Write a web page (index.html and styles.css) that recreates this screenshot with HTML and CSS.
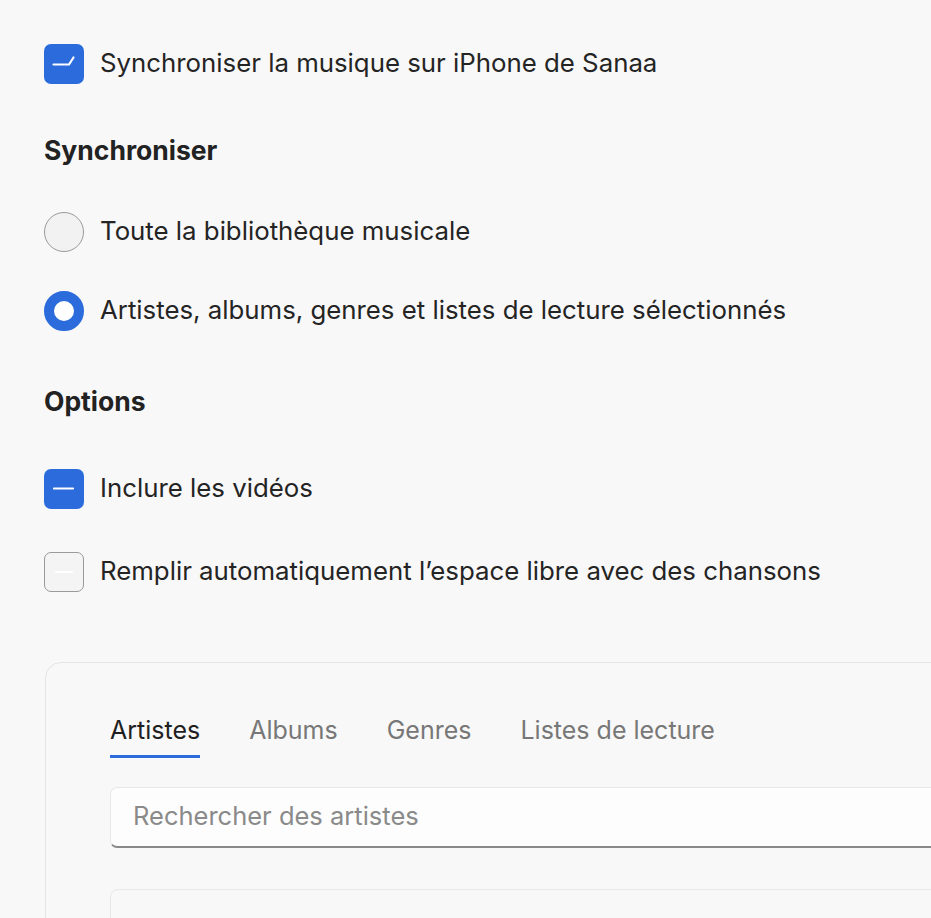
FILE: index.html
```html
<!DOCTYPE html>
<html lang="fr">
<head>
<meta charset="utf-8">
<link rel="stylesheet" href="styles.css">
</head>
<body>
<div class="page">
  <label class="row row-sync">
    <span class="check check-on">
      <svg viewBox="0 0 40 40" width="40" height="40"><path d="M9.5 20.5 H25 L29.5 13.5" fill="none" stroke="#fff" stroke-width="2.2" stroke-linecap="round" stroke-linejoin="round"/></svg>
    </span>
    <span class="label">Synchroniser la musique sur iPhone de Sanaa</span>
  </label>

  <h2 class="heading heading-sync">Synchroniser</h2>

  <label class="row row-radio1">
    <span class="radio"></span>
    <span class="label">Toute la bibliothèque musicale</span>
  </label>
  <label class="row row-radio2">
    <span class="radio radio-on"></span>
    <span class="label">Artistes, albums, genres et listes de lecture sélectionnés</span>
  </label>

  <h2 class="heading heading-options">Options</h2>

  <label class="row row-videos">
    <span class="check check-on">
      <svg viewBox="0 0 40 40" width="40" height="40"><path d="M10 19.5 H29" fill="none" stroke="#fff" stroke-width="2.2" stroke-linecap="round"/></svg>
    </span>
    <span class="label">Inclure les vidéos</span>
  </label>
  <label class="row row-fill">
    <span class="check check-off">
      <svg viewBox="0 0 40 40" width="40" height="40"><path d="M12 20 H28" fill="none" stroke="#fff" stroke-width="2.2" stroke-linecap="round"/></svg>
    </span>
    <span class="label">Remplir automatiquement l’espace libre avec des chansons</span>
  </label>

  <section class="panel">
    <nav class="tabs">
      <span class="tab tab-active">Artistes</span>
      <span class="tab">Albums</span>
      <span class="tab">Genres</span>
      <span class="tab">Listes de lecture</span>
    </nav>
    <div class="search">Rechercher des artistes</div>
    <div class="list"></div>
  </section>
</div>
</body>
</html>
```

FILE: styles.css
```css
html, body {
  margin: 0;
  padding: 0;
  background: #f8f8f8;
  overflow: hidden;
  height: 918px;
}
body {
  font-family: Inter, "Noto Sans", "Liberation Sans", sans-serif;
  color: #222222;
}
.page {
  padding: 44px 0 0 44px;
  display: flex;
  flex-direction: column;
}
.row {
  display: flex;
  align-items: center;
  gap: 16px;
  height: 40px;
}
.label {
  font-size: 25.8px;
  line-height: 32px;
  padding-bottom: 3px;
  color: #242424;
}
.check {
  width: 40px;
  height: 40px;
  box-sizing: border-box;
  border-radius: 7px;
  flex: none;
  display: block;
}
.check svg { display: block; }
.check-on {
  background: #2c6bdc;
}
.check-off {
  background: #f4f4f4;
  border: 1.5px solid #9a9a9a;
}
.check-off svg { margin: -1.5px; }
.radio {
  width: 40px;
  height: 40px;
  box-sizing: border-box;
  border-radius: 50%;
  border: 1.5px solid #9a9a9a;
  background: #f2f2f2;
  flex: none;
}
.radio-on {
  border: 10px solid #2c6bdc;
  background: #ffffff;
}
.heading {
  margin: 0;
  font-size: 26.5px;
  font-weight: 700;
  line-height: 30px;
  color: #222222;
}
.heading-sync { margin-top: 51px; }
.row-radio1 { margin-top: 47px; }
.row-radio2 { margin-top: 39px; }
.heading-options { margin-top: 55px; }
.row-videos { margin-top: 53px; }
.row-fill { margin-top: 43px; }

.panel {
  margin-top: 70px;
  margin-left: 1px;
  width: 960px;
  height: 400px;
  border: 1.5px solid #e4e4e4;
  border-radius: 16px;
  background: #f8f8f8;
  padding: 52px 0 0 64px;
  box-sizing: border-box;
}
.tabs {
  display: flex;
  gap: 49px;
}
.tab {
  font-size: 25px;
  line-height: 30px;
  color: #777777;
  padding-bottom: 10px;
  border-bottom: 3px solid transparent;
}
.tab-active {
  color: #1f1f1f;
  border-bottom-color: #2c6bdc;
}
.search {
  margin-top: 29px;
  height: 61px;
  box-sizing: border-box;
  background: #fdfdfd;
  border: 1.5px solid #e8e8e8;
  border-bottom: 2px solid #8a8a8a;
  border-radius: 7px;
  padding-left: 22px;
  padding-bottom: 4px;
  display: flex;
  align-items: center;
  font-size: 25.5px;
  color: #8a8a8a;
}
.list {
  margin-top: 41px;
  height: 100px;
  border: 1.5px solid #e8e8e8;
  border-radius: 8px;
  background: #f8f8f8;
}
```
